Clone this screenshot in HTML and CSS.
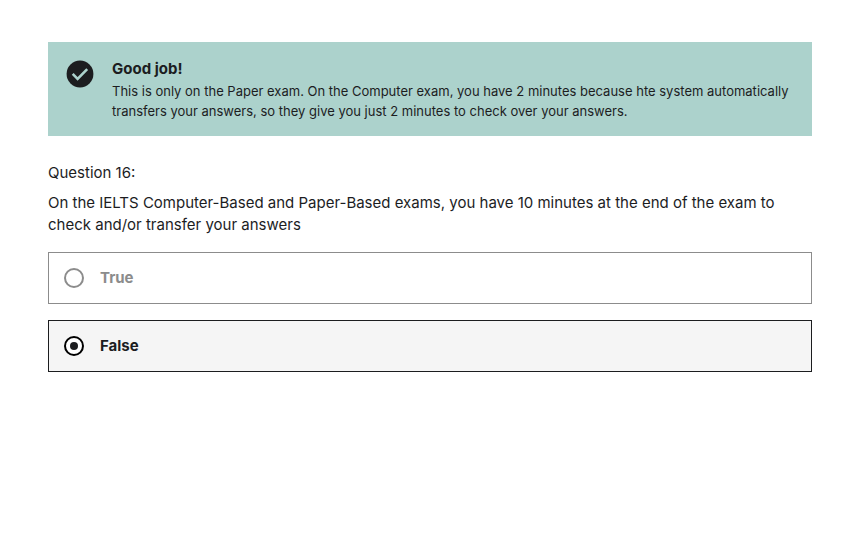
FILE: index.html
```html
<!DOCTYPE html>
<html lang="en">
  <head>
    <meta charset="UTF-8" />
    <meta name="viewport" content="width=device-width, initial-scale=1.0" />
    <title>Question 16</title>
    <link rel="stylesheet" href="styles.css">
  </head>
  <body>
    <main class="quiz">
      <div class="alert" role="status">
        <svg class="alert-icon" viewBox="0 0 28 28" aria-hidden="true">
          <circle cx="14" cy="14" r="13.4" fill="#1c1d1f" />
          <path d="M6.7 13.9l4.9 4.9 9.6-9.6" fill="none" stroke="#acd2cc" stroke-width="2.6" />
        </svg>
        <div class="alert-body">
          <h2 class="alert-title">Good job!</h2>
          <p class="alert-text">This is only on the Paper exam. On the Computer exam, you have 2 minutes because hte system automatically transfers your answers, so they give you just 2 minutes to check over your answers.</p>
        </div>
      </div>
      <form class="question">
        <p class="question-number">Question 16:</p>
        <p class="question-text" id="prompt">On the IELTS Computer-Based and Paper-Based exams, you have 10 minutes at the end of the exam to check and/or transfer your answers</p>
        <ul class="answers" role="radiogroup" aria-labelledby="prompt">
          <li>
            <label class="answer disabled">
              <input type="radio" name="answer" value="true" disabled />
              <span>True</span>
            </label>
          </li>
          <li>
            <label class="answer selected">
              <input type="radio" name="answer" value="false" checked />
              <span>False</span>
            </label>
          </li>
        </ul>
      </form>
    </main>
  </body>
</html>
```

FILE: styles.css
```css
* {
  box-sizing: border-box;
}

body {
  font-family: Inter, "Liberation Sans", sans-serif;
  background-color: #fff;
  color: #1c1d1f;
  margin: 0;
}

.quiz {
  padding: 42px 46px 42px 48px;
}

.alert {
  display: flex;
  gap: 18px;
  padding: 15px 18px;
  background-color: #acd2cc;
}

.alert-icon {
  flex: none;
  width: 28px;
  height: 28px;
  margin-top: 3px;
}

.alert-title {
  margin: 0;
  font-size: 15px;
  line-height: 24px;
}

.alert-text {
  margin: 0;
  font-size: 13px;
  line-height: 20px;
}

.question {
  margin-top: 26px;
}

.question-number,
.question-text {
  margin: 0 0 8px;
  font-size: 15px;
  line-height: 22px;
}

.answers {
  display: flex;
  flex-direction: column;
  gap: 16px;
  list-style: none;
  margin: 16px 0 0;
  padding: 0;
}

.answer {
  display: flex;
  align-items: center;
  gap: 16px;
  padding: 15px;
  border: 1px solid #1c1d1f;
  font-size: 15px;
  font-weight: bold;
  line-height: 20px;
}

.answer input {
  appearance: none;
  display: grid;
  place-content: center;
  width: 20px;
  height: 20px;
  margin: 0;
  border: 2px solid #000;
  border-radius: 50%;
  background-color: #fff;
}

.answer input:checked::before {
  content: "";
  width: 8px;
  height: 8px;
  border-radius: 50%;
  background-color: #1c1d1f;
}

.disabled {
  border-color: #8c8c8c;
  color: #8c8c8c;
}

.disabled input {
  border-color: #8c8c8c;
}

.selected {
  background-color: #f5f5f5;
}
```
